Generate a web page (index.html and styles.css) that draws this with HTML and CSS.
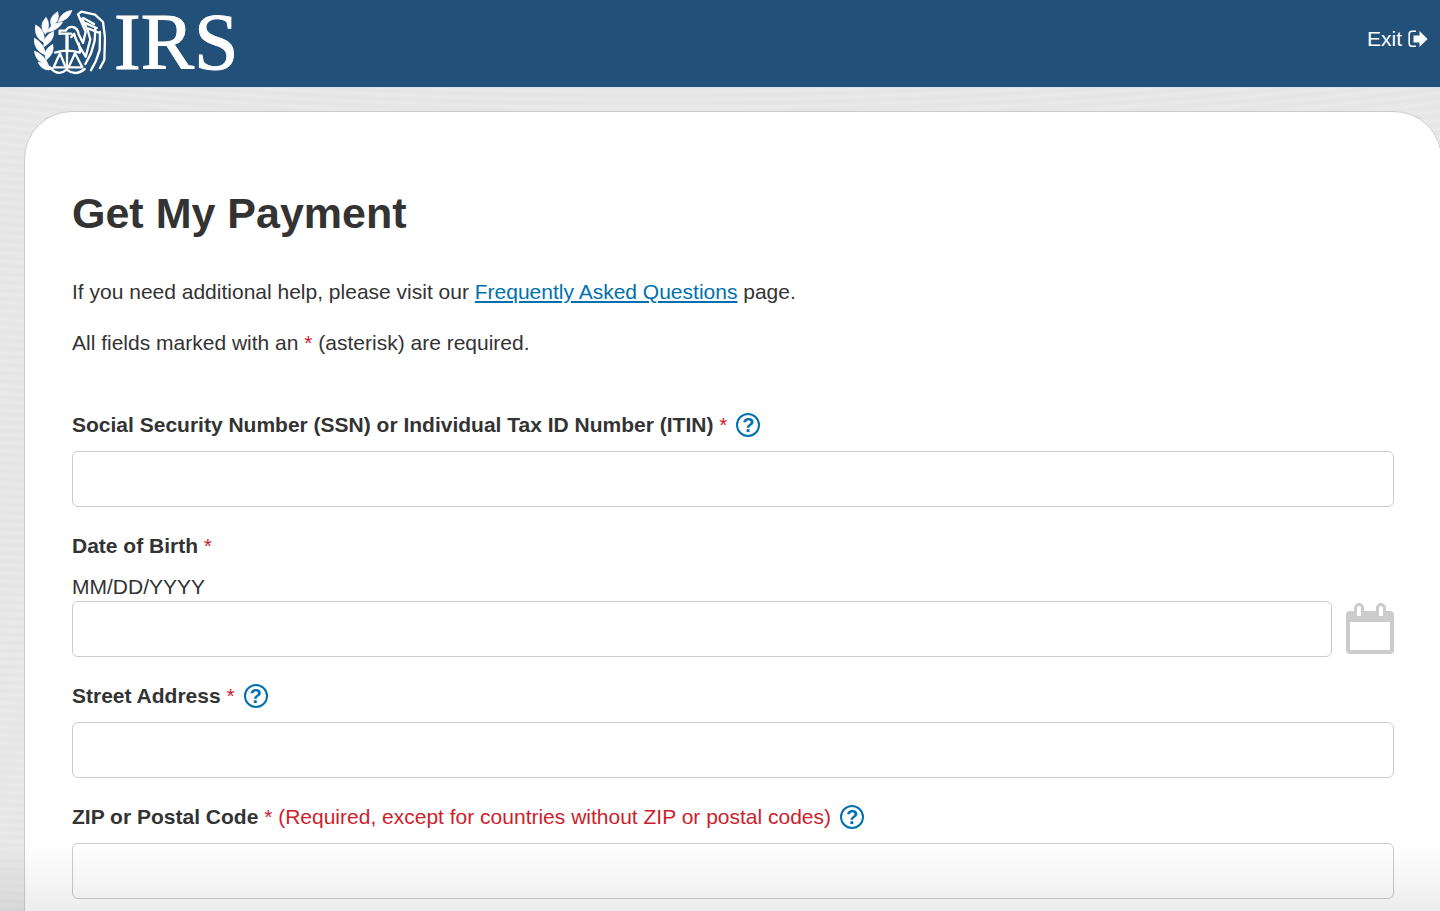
FILE: index.html
```html
<!DOCTYPE html>
<html lang="en">
  <head>
    <meta charset="UTF-8" />
    <meta name="viewport" content="width=device-width, initial-scale=1.0" />
    <title>Get My Payment</title>
    <link rel="stylesheet" href="styles.css">
  </head>
  <body>
    <header class="header">
      <a class="logo" href="#">
        <svg class="emblem" viewBox="42 30 216 195" aria-hidden="true">
          <!-- olive branch -->
          <g fill="#fff" stroke="#fff" stroke-width="2" stroke-linejoin="round">
            <path d="M156 31 Q146 62 114 66 Q124 35 156 31Z" />
            <path d="M113 35 Q122 62 95 80 Q83 53 113 35Z" />
            <path d="M128 67 Q112 93 80 97 Q93 68 128 67Z" />
            <path d="M78 52 Q95 75 76 103 Q54 78 78 52Z" />
            <path d="M47 75 Q76 88 73 128 Q40 112 47 75Z" />
            <path d="M101 94 Q104 121 71 141 Q69 108 101 94Z" />
            <path d="M42 114 Q71 128 78 165 Q42 154 42 114Z" />
            <path d="M98 133 Q106 158 79 180 Q65 154 98 133Z" />
            <path d="M43 153 Q72 163 85 194 Q48 190 43 153Z" />
            <path d="M54 187 Q77 189 101 206 Q70 219 54 187Z" />
          </g>
          <g fill="none" stroke="#fff" stroke-width="7" stroke-linejoin="round" stroke-linecap="round">
            <!-- eagle head and wing -->
            <path d="M119 101 V92 H137 Q145 79 158 81 Q174 85 176 103 L189 129 L197 95 L174 43 L184 35 L225 44 L249 66 L255 113 L253 180 L240 204" />
            <path d="M154 111 L162 101 Q171 130 185 150 L197 170 L211 118 L203 90 L186 56" />
            <path d="M190 54 L222 72 M198 70 L230 84 M206 86 L236 98" />
            <path d="M226 84 L224 122 L213 160 L196 192" />
            <path d="M240 96 L239 150 L228 182 L213 211" />
            <path d="M176 130 L181 155" />
            <!-- scales -->
            <path d="M119 101 H153" />
            <path d="M141 104 V154" stroke-width="10" />
            <path d="M105 158 Q141 146 179 158 M141 150 V205" />
            <path d="M120 160 L101 202 H137Z M165 160 L146 202 H187Z" />
            <path d="M92 205 Q115 230 140 209 Q166 230 194 207" />
          </g>
        </svg>
        <span class="logo-text">IRS</span>
      </a>
      <a class="exit" href="#">
        Exit
        <svg class="exit-icon" viewBox="0 0 20 18" aria-hidden="true">
          <path d="M8 1.200H4Q1.200 1.200 1.200 4v9.500q0 2.800 2.800 2.800h4" fill="none" stroke="#fff" stroke-width="1.6" />
          <path d="M5.500 5.500h6V1L19.500 9l-8 8V12.500h-6z" fill="#fff" />
        </svg>
      </a>
    </header>

    <main class="card">
      <h1>Get My Payment</h1>
      <p>If you need additional help, please visit our <a href="#">Frequently Asked Questions</a> page.</p>
      <p>All fields marked with an <span class="required">*</span> (asterisk) are required.</p>

      <form class="payment-form">
        <div class="field">
          <div class="label-row">
            <label for="ssn">Social Security Number (SSN) or Individual Tax ID Number (ITIN) <span class="required">*</span></label>
            <button type="button" class="help" aria-label="Help with SSN or ITIN">?</button>
          </div>
          <input type="text" id="ssn">
        </div>

        <div class="field">
          <div class="label-row">
            <label for="dob">Date of Birth <span class="required">*</span></label>
          </div>
          <div class="hint" id="dob-hint">MM/DD/YYYY</div>
          <div class="date-row">
            <input type="text" id="dob" aria-describedby="dob-hint">
            <button type="button" class="calendar" aria-label="Choose a date">
              <svg viewBox="0 0 48 52" aria-hidden="true">
                <path fill="#ccc" fill-rule="evenodd" d="M4 8H8V5a5 5 0 0 1 10 0V8H30V5a5 5 0 0 1 10 0V8H44a4 4 0 0 1 4 4V47a4 4 0 0 1-4 4H4a4 4 0 0 1-4-4V12a4 4 0 0 1 4-4ZM4 19V47H44V19ZM11 5V13H15V5a2 2 0 0 0-4 0ZM33 5V13H37V5a2 2 0 0 0-4 0Z" />
              </svg>
            </button>
          </div>
        </div>

        <div class="field">
          <div class="label-row">
            <label for="street">Street Address <span class="required">*</span></label>
            <button type="button" class="help" aria-label="Help with street address">?</button>
          </div>
          <input type="text" id="street">
        </div>

        <div class="field">
          <div class="label-row">
            <label for="zip">ZIP or Postal Code <span class="required">* (Required, except for countries without ZIP or postal codes)</span></label>
            <button type="button" class="help" aria-label="Help with ZIP or postal code">?</button>
          </div>
          <input type="text" id="zip">
        </div>
      </form>
    </main>
    <div class="bottom-fade"></div>
  </body>
</html>
```
FILE: styles.css
```css
* {
  box-sizing: border-box;
}
body {
  margin: 0;
  overflow-x: hidden;
  font-family: "Liberation Sans", Arial, sans-serif;
  font-size: 21px;
  line-height: 30px;
  color: #333;
  background: repeating-radial-gradient(3200px 800px at 45% -300px, #eaeaea 0, #e5e5e5 16px, #eaeaea 32px);
}
.header {
  display: flex;
  justify-content: space-between;
  align-items: flex-start;
  height: 88px;
  padding: 0 12px 0 34px;
  background-color: #235078;
  border-bottom: 1px solid #d5e3ef;
}
.logo {
  display: flex;
  align-items: center;
  gap: 8px;
  height: 84px;
  color: #fff;
  text-decoration: none;
}
.emblem {
  width: 72px;
  height: 65px;
}
.logo-text {
  font-family: "Liberation Serif", "Times New Roman", serif;
  font-size: 80px;
  line-height: normal;
  -webkit-text-stroke: 1px #fff;
}
.exit {
  display: flex;
  align-items: center;
  gap: 6px;
  padding-top: 24px;
  color: #fff;
  text-decoration: none;
}
.exit-icon {
  width: 20px;
  height: 18px;
}
.card {
  margin: 23px -2px 0 24px;
  padding: 76px 47px 48px;
  background-color: #fff;
  border: 1px solid #ccc;
  border-radius: 48px 48px 0 0;
}
h1 {
  margin: 0 0 39px;
  font-size: 43px;
  line-height: 50px;
}
p {
  margin: 0 0 21px;
}
p a {
  color: #0071ae;
}
.required {
  color: #cc1e2c;
  font-weight: normal;
}
.payment-form {
  display: flex;
  flex-direction: column;
  gap: 24px;
  margin-top: 52px;
}
.label-row {
  display: flex;
  align-items: center;
  gap: 9px;
  margin-bottom: 11px;
}
.hint {
  line-height: 29px;
}
label {
  font-weight: bold;
}
.help {
  width: 24px;
  height: 24px;
  padding: 0;
  font-family: inherit;
  font-size: 20px;
  font-weight: bold;
  line-height: 20px;
  color: #0071ae;
  background: none;
  border: 2px solid #0071ae;
  border-radius: 50%;
  cursor: pointer;
}
input {
  display: block;
  width: 100%;
  height: 56px;
  padding: 8px 16px;
  font: inherit;
  color: #333;
  background-color: #fff;
  border: 1px solid #ccc;
  border-radius: 6px;
}
.date-row {
  display: flex;
  align-items: center;
  gap: 14px;
}
.date-row input {
  flex: 1;
}
.calendar {
  width: 48px;
  height: 52px;
  padding: 0;
  background: none;
  border: none;
  cursor: pointer;
}
.calendar svg {
  display: block;
}
.bottom-fade {
  position: fixed;
  left: 0;
  right: 0;
  bottom: 0;
  height: 68px;
  background: linear-gradient(rgba(0, 0, 0, 0), rgba(0, 0, 0, 0.07));
  pointer-events: none;
}
```
